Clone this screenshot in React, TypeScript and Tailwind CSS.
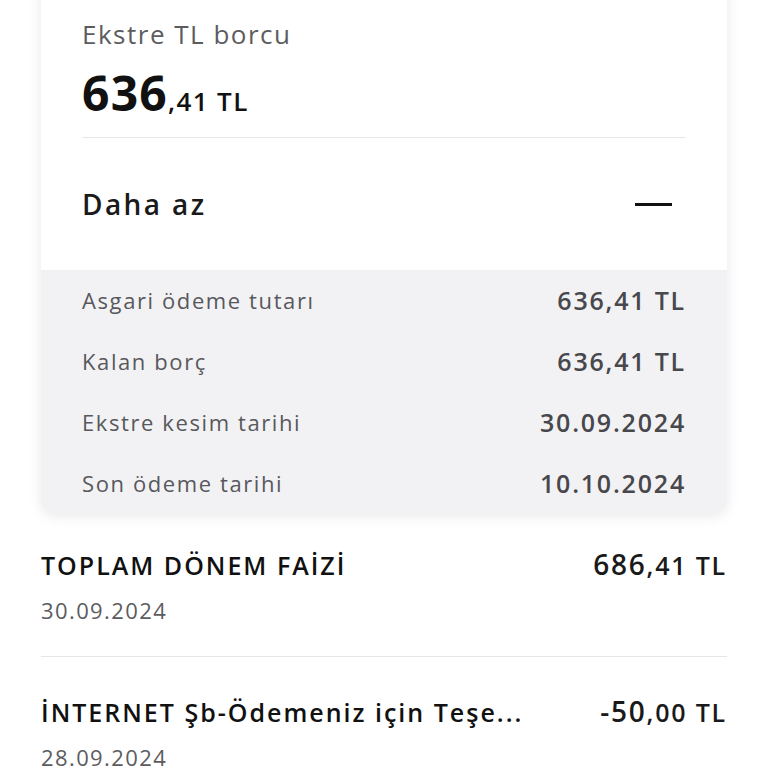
const details = [
  { label: 'Asgari ödeme tutarı', value: '636,41 TL' },
  { label: 'Kalan borç', value: '636,41 TL' },
  { label: 'Ekstre kesim tarihi', value: '30.09.2024' },
  { label: 'Son ödeme tarihi', value: '10.10.2024' },
];

const transactions = [
  { title: 'TOPLAM DÖNEM FAİZİ', date: '30.09.2024', whole: '686', cents: ',41 TL' },
  { title: 'İNTERNET Şb-Ödemeniz için Teşe...', date: '28.09.2024', whole: '-50', cents: ',00 TL' },
];

export default function App() {
  return (
    <div className="min-h-[768px] w-[768px] overflow-hidden bg-white px-[41px] font-['Open_Sans',sans-serif]">
      <div className="-mt-[20px] overflow-hidden rounded-b-[14px] bg-white shadow-[0_2px_14px_rgba(0,0,0,0.09)]">
        <div className="px-[41px] pt-[34px]">
          <div className="text-[26px] leading-[40px] tracking-[1.5px] text-[#5c5c5f]">Ekstre TL borcu</div>
          <div className="mt-[15px] flex items-baseline leading-[48px] text-[#111]">
            <span className="text-[48px] font-bold tracking-[1.2px]">636</span>
            <span className="text-[26px] font-semibold tracking-[1.4px]">,41 TL</span>
          </div>
          <div className="mt-[12px] h-px bg-[#e6e6e8]" />
          <div className="flex h-[132px] items-center justify-between">
            <span className="text-[28px] font-semibold tracking-[2.4px] text-[#1a1a1a]">Daha az</span>
            <span className="mr-[14px] h-[3px] w-[37px] bg-[#111]" />
          </div>
        </div>
        <div className="bg-[#f2f2f4] px-[41px]">
          {details.map((d) => (
            <div key={d.label} className="flex h-[61px] items-center justify-between">
              <span className="text-[22px] tracking-[1.6px] text-[#58585c]">{d.label}</span>
              <span className="text-[25px] font-semibold tracking-[1.8px] text-[#48484c]">{d.value}</span>
            </div>
          ))}
        </div>
      </div>

      <div className="mt-[30px]">
        {transactions.map((t, i) => (
          <div key={t.title} className={i > 0 ? 'border-t border-[#e6e6e8] pt-[34px]' : ''}>
            <div className="flex items-center justify-between gap-[20px] leading-[40px]">
              <span className="min-w-0 flex-1 truncate text-[25px] font-semibold tracking-[2px] text-[#111]">{t.title}</span>
              <span className="shrink-0 text-[28px] font-semibold tracking-[1.8px] text-[#1a1a1a]">
                {t.whole}
                <span className="text-[25px]">{t.cents}</span>
              </span>
            </div>
            <div className="mt-[5px] mb-[26px] text-[22px] leading-[40px] tracking-[1.4px] text-[#5c5c5f]">{t.date}</div>
          </div>
        ))}
      </div>
    </div>
  );
}
